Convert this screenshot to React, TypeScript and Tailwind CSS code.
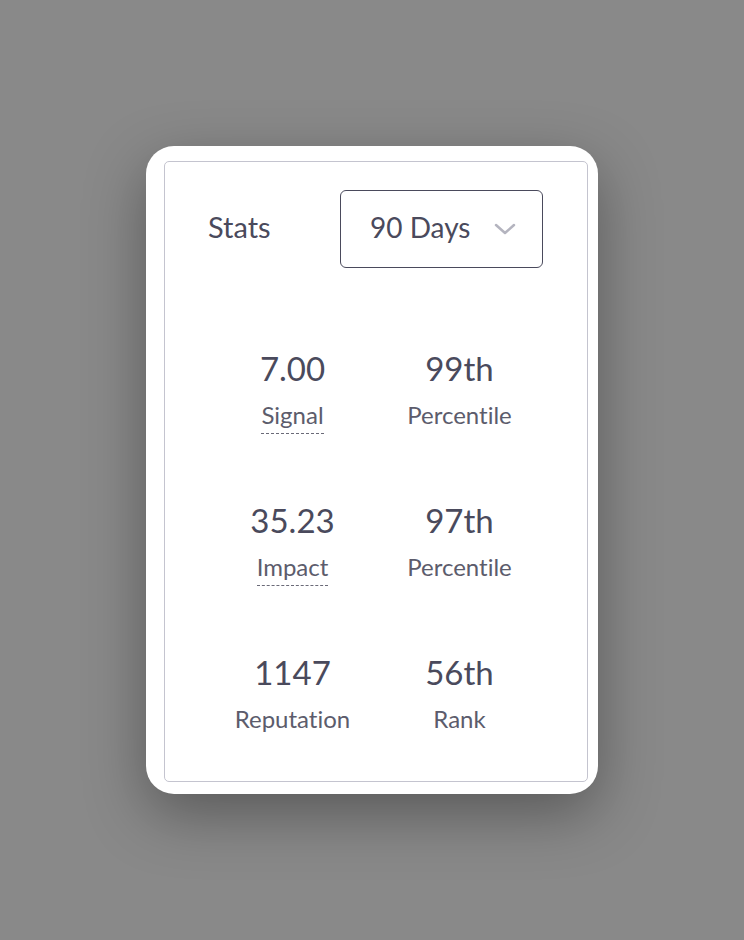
import React from "react";

const stats = [
  { v: "7.00", l: "Signal", dashed: true, v2: "99th", l2: "Percentile" },
  { v: "35.23", l: "Impact", dashed: true, v2: "97th", l2: "Percentile" },
  { v: "1147", l: "Reputation", dashed: false, v2: "56th", l2: "Rank" },
];

export default function App() {
  return (
    <div
      className="min-h-screen w-full bg-[#898989] flex items-center justify-center [font-variant-ligatures:none]"
      style={{ fontFamily: "Lato, 'Noto Sans', sans-serif" }}
    >
      <div className="w-[452px] h-[648px] bg-white rounded-[28px] pl-[18px] pt-[15px] pr-[10px] pb-[12px] shadow-[0_20px_60px_rgba(0,0,0,0.35)]">
        <div className="h-full border border-[#c4c4cf] rounded-[5px] flex flex-col text-[#4a4a5c]">
          <div className="flex items-center justify-between pl-[43px] pr-[44px] pt-[28px]">
            <span className="text-[29px] leading-none -mt-[5px]">Stats</span>
            <div className="w-[203px] h-[78px] border border-[#4a4a5c] rounded-[6px] flex items-center pl-[29px] pr-[26px] justify-between">
              <span className="text-[28px] leading-none -mt-[4px]">90 Days</span>
              <svg width="22" height="14" viewBox="0 0 22 14" fill="none">
                <path d="M2 3l9 8 9-8" stroke="#b4b4bf" strokeWidth="2.5" strokeLinecap="round" strokeLinejoin="round" />
              </svg>
            </div>
          </div>
          <div className="px-[44px] mt-[80px] flex flex-col">
            {stats.map((s) => (
              <div key={s.v} className="grid grid-cols-2 h-[152px]">
                <div className="flex flex-col items-center">
                  <span className="text-[33px] leading-[40px]">{s.v}</span>
                  <span
                    className={
                      "text-[24px] leading-[30px] mt-[12px] text-[#5c5c6c] " +
                      (s.dashed ? "border-b border-dashed border-[#6a6a78] pb-[3px]" : "pb-[4px]")
                    }
                  >
                    {s.l}
                  </span>
                </div>
                <div className="flex flex-col items-center">
                  <span className="text-[33px] leading-[40px]">{s.v2}</span>
                  <span className="text-[24px] leading-[30px] mt-[12px] text-[#5c5c6c]">{s.l2}</span>
                </div>
              </div>
            ))}
          </div>
        </div>
      </div>
    </div>
  );
}
